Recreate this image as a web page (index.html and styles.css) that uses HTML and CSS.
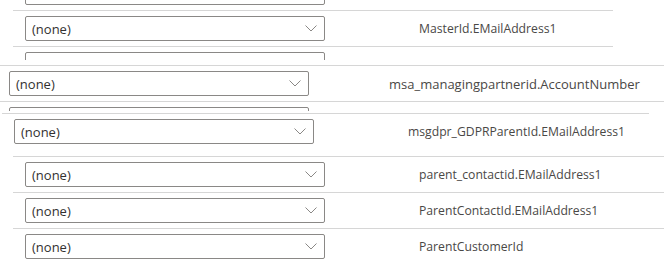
FILE: index.html
```html
<!DOCTYPE html>
<html lang="en">
<head>
  <meta charset="UTF-8">
  <meta name="viewport" content="width=device-width, initial-scale=1.0">
  <title>Field mapping</title>
  <link rel="stylesheet" href="styles.css">
</head>
<body>

<div class="band band-a">
  <div class="rows">
    <div class="row">
      <div class="dropdown"><span>(none)</span><svg class="chevron" width="12" height="7" viewBox="0 0 12 7"><polyline points="0.5,0.5 6,6 11.5,0.5"/></svg></div>
      <div class="field">ManagingPartnerId</div>
    </div>
    <div class="row">
      <div class="dropdown"><span>(none)</span><svg class="chevron" width="12" height="7" viewBox="0 0 12 7"><polyline points="0.5,0.5 6,6 11.5,0.5"/></svg></div>
      <div class="field">MasterId.EMailAddress1</div>
    </div>
    <div class="row">
      <div class="dropdown"></div>
    </div>
  </div>
</div>

<div class="band band-b">
  <div class="rows">
    <div class="row">
      <div class="dropdown"><span>(none)</span><svg class="chevron" width="12" height="7" viewBox="0 0 12 7"><polyline points="0.5,0.5 6,6 11.5,0.5"/></svg></div>
      <div class="field">msa_managingpartnerid.AccountNumber</div>
    </div>
    <div class="row">
      <div class="dropdown"></div>
    </div>
  </div>
</div>

<div class="band band-c">
  <div class="rows">
    <div class="row">
      <div class="dropdown"><span>(none)</span><svg class="chevron" width="12" height="7" viewBox="0 0 12 7"><polyline points="0.5,0.5 6,6 11.5,0.5"/></svg></div>
      <div class="field">msgdpr_GDPRParentId.EMailAddress1</div>
    </div>
  </div>
</div>

<div class="band band-d">
  <div class="rows">
    <div class="row">
      <div class="dropdown"><span>(none)</span><svg class="chevron" width="12" height="7" viewBox="0 0 12 7"><polyline points="0.5,0.5 6,6 11.5,0.5"/></svg></div>
      <div class="field">parent_contactid.EMailAddress1</div>
    </div>
    <div class="row">
      <div class="dropdown"><span>(none)</span><svg class="chevron" width="12" height="7" viewBox="0 0 12 7"><polyline points="0.5,0.5 6,6 11.5,0.5"/></svg></div>
      <div class="field">ParentContactId.EMailAddress1</div>
    </div>
    <div class="row">
      <div class="dropdown"><span>(none)</span><svg class="chevron" width="12" height="7" viewBox="0 0 12 7"><polyline points="0.5,0.5 6,6 11.5,0.5"/></svg></div>
      <div class="field">ParentCustomerId</div>
    </div>
  </div>
</div>

</body>
</html>
```

FILE: styles.css
```css
body {
  margin: 0;
  width: 664px;
  height: 268px;
  overflow: hidden;
  background-color: #fff;
  font-family: "Open Sans", "Noto Sans", sans-serif;
  font-size: 13px;
}

/* each band is a slice of the list, scrolled and shifted a little */
.band {
  overflow: hidden;
  background-color: #fff;
}

.band-a {
  height: 60px;
  margin-left: 13px;
  width: 600px;
}

.band-a .rows {
  margin-top: -26px;
}

.band-b {
  height: 51px;
  margin-left: -3px;
  width: 667px;
  padding-top: 5px;
  box-sizing: border-box;
}

.band-c {
  height: 41px;
  margin-left: 2px;
  width: 647px;
  padding-top: 2px;
  box-sizing: border-box;
}

.band-d {
  height: 116px;
  margin-left: 13px;
  width: 651px;
  padding-top: 4px;
  box-sizing: border-box;
}

.row {
  display: flex;
  align-items: center;
  border-top: 1px solid #d6d6d6;
  padding: 5px 0 5px 12px;
}

.dropdown {
  display: flex;
  align-items: center;
  justify-content: space-between;
  box-sizing: border-box;
  width: 300px;
  height: 25px;
  padding: 0 7px 0 6px;
  border: 1px solid #8a8886;
  border-radius: 2px;
  color: #323130;
  flex-shrink: 0;
}

.chevron {
  fill: none;
  stroke: #8a8886;
  stroke-width: 1;
}

.field {
  margin-left: 94px;
  color: #4a4846;
  font-size: 12.2px;
  white-space: nowrap;
}

.band-b .field {
  margin-left: 80px;
  font-size: 13px;
}
```
